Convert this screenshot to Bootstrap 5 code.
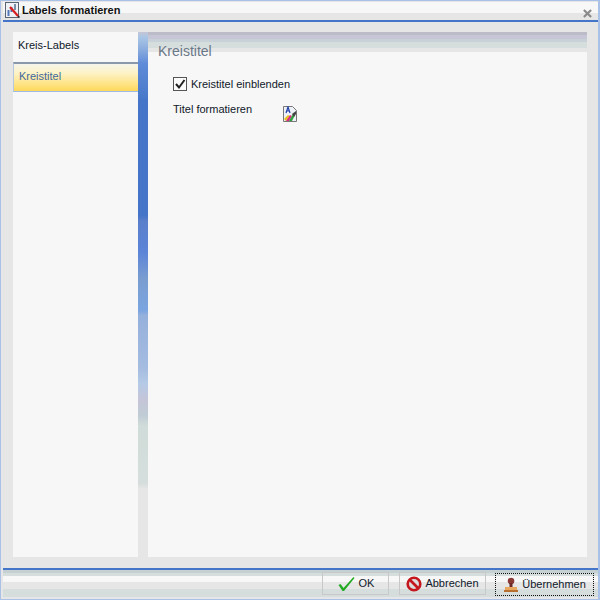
<!DOCTYPE html>
<html lang="de"><head><meta charset="utf-8">
<title>Labels formatieren</title>
<link rel="stylesheet" href="https://cdn.jsdelivr.net/npm/bootstrap@5.3.0/dist/css/bootstrap.min.css">
<style>
html,body{margin:0;width:600px;height:600px;overflow:hidden;background:#e6e6e6}
body{font-family:"Liberation Sans",Arial,sans-serif;font-size:11px;color:#10182a;line-height:14px}
.dlg{width:600px;height:600px;border:1px solid #a9c1e6;border-right-width:2px;background:#e6e6e6}
.dlg-head{margin:0 0 0 2px;padding:1px 0 0 1px;background:linear-gradient(#e6e6e6 0 1px,#f7f7f7 1px 12px,#e6e6e6 12px);border-bottom:2px solid #4475c8;box-sizing:content-box;height:18px}
.dlg-title{font-weight:700;font-size:11px;color:#111;margin-left:2px;margin-top:1px}
.dlg-x{margin:7px 6px 0 auto;width:9px;height:9px}
.dlg-body{height:525px;margin:10px 11px 11px 12px}
.side{width:125px;background:#f7f7f7}
.side-a{padding:6px 5px;height:30px;line-height:14px}
.side-b{height:30px;padding:5px 5px;color:#42699f;border-top:2px solid #8a98ac;border-left:1px solid #b5c8e0;border-bottom:1px solid #9dbbe4;background:linear-gradient(#f5f4ec,#fdf2c4 35%,#ffd95a)}
.strip{width:10px;background:linear-gradient(#c5c5d5 0,#a9c6e6 1%,#8fb0df 3%,#5f8bd8 6%,#4a7bcb 12%,#4575c8 13%,#4575c8 35%,#5a7fcb 36%,#5c85d8 42%,#7a9dd0 47%,#7aa5e0 53%,#95b0dc 54%,#a5bce0 64%,#b5cae6 67%,#c5c5d8 70%,#c0ccd5 73%,#d0dcd9 75%,#d5dedc 86%,#e6e6e6 87%)}
.main{width:439px;background:#f7f7f7}
.main-head{height:20px;padding-left:10px;font-size:14px;line-height:38px;color:#6a7888;background:linear-gradient(#bcbcc8 0 3px,#c6c6d6 3px 7px,#c8d0d8 7px 10px,#d5dedc 10px 16px,#e6e6e6 16px)}
.main-inner{padding:25px 0 0 25px}
.chk{width:14px;height:14px;border:1px solid #555;background:#fbfbfb;margin-right:4px}
.row-two{margin-top:11px}
.row-two svg{margin:4px 0 0 30px}
.dlg-foot{height:29px;padding:0 4px 0 0;margin-left:2px;justify-content:flex-end;border-top:2px solid #4475c8;background:linear-gradient(#c5d0d2 0 3px,#d5dedc 3px 6px,#f7f7f7 6px 12px,#e6e6e6 12px 19px,#d5dedc 19px 27px,#e6e6e6 27px)}
.fbtn{height:23px;margin-top:2px;border:1px solid #c8c8c8;color:#10182a;font-size:11px;padding:0;line-height:21px;gap:3px;border-radius:0;background:transparent}
.fbtn-ok{width:67px}.fbtn-ab{width:87px;margin-left:10px}
.fbtn-ue{width:99px;margin-left:9px;margin-top:3px;border:1px dotted #111}
</style></head>
<body>
<div class="dlg d-flex flex-column">
  <div class="dlg-head d-flex align-items-start">
    <svg width="16" height="16" viewBox="0 0 16 16"><rect x="1.500" y=".5" width="13" height="15" fill="#eef1f6" stroke="#5b6472"/><rect x="3.500" y="8" width="2" height="6" fill="#5577b5"/><rect x="6.500" y="5" width="2" height="5" fill="#5577b5"/><rect x="10" y="2" width="2" height="6" fill="#7b8ea8"/><path d="M6 5l8 9" stroke="#d81c1c" stroke-width="2.200"/><path d="M14 14l1.500 1.500" stroke="#222" stroke-width="1.500"/></svg>
    <div class="dlg-title">Labels formatieren</div>
    <svg class="dlg-x" viewBox="0 0 10 10"><path d="M1 1l8 8M9 1l-8 8" stroke="#8a8a8a" stroke-width="2.400"/></svg>
  </div>
  <div class="dlg-body d-flex">
    <div class="side">
      <div class="side-a">Kreis-Labels</div>
      <div class="side-b">Kreistitel</div>
    </div>
    <div class="strip"></div>
    <div class="main">
      <div class="main-head">Kreistitel</div>
      <div class="main-inner">
        <div class="d-flex align-items-center">
          <div class="chk d-flex"><svg width="12" height="12" viewBox="0 0 12 12"><path d="M2 6l3 3.500L10.500 2" fill="none" stroke="#222" stroke-width="2"/></svg></div>
          <span>Kreistitel einblenden</span>
        </div>
        <div class="row-two d-flex align-items-start">
          <span>Titel formatieren</span>
          <svg width="16" height="16" viewBox="0 0 16 16"><path d="M1.500.5h9l4 4v11h-13z" fill="#eef1f8" stroke="#777"/><path d="M4 7l2-6 2 6M5 5h2" fill="none" stroke="#1f3fa8" stroke-width="1.200"/><path d="M2 13l4-4 1.500 1-3.500 5z" fill="#e8c020"/><path d="M4 15l4-6 2 1-3 5z" fill="#e02a80"/><path d="M7 15l4-7 2 1-3 6z" fill="#30a040"/><path d="M10 8l4-3v3l-2 3z" fill="#444"/></svg>
        </div>
      </div>
    </div>
  </div>
  <div class="dlg-foot d-flex">
    <button class="btn fbtn fbtn-ok d-flex justify-content-center align-items-center"><svg width="19" height="16" viewBox="0 0 18 16"><path d="M1 9l2-1 3 4L16 1l1 1L6.500 15H5z" fill="#22aa22"/></svg><span>OK</span></button>
    <button class="btn fbtn fbtn-ab d-flex justify-content-center align-items-center"><svg width="16" height="16" viewBox="0 0 16 16"><circle cx="8" cy="8" r="6.300" fill="#dcdcdc" stroke="#c4161c" stroke-width="2.600"/><path d="M3.500 3.500l9 9" stroke="#c4161c" stroke-width="2.600"/></svg><span>Abbrechen</span></button>
    <button class="btn fbtn fbtn-ue d-flex justify-content-center align-items-center"><svg width="16" height="16" viewBox="0 0 16 16"><circle cx="8" cy="4" r="3.300" fill="#8a3a34"/><rect x="6.500" y="6" width="3" height="4" fill="#6a2a26"/><rect x="2" y="10" width="12" height="3" fill="#e8a860"/><rect x="1" y="13" width="14" height="2" fill="#b87030"/></svg><span>Übernehmen</span></button>
  </div>
</div>
<script src="https://cdn.jsdelivr.net/npm/bootstrap@5.3.0/dist/js/bootstrap.bundle.min.js"></script>
</body></html>
